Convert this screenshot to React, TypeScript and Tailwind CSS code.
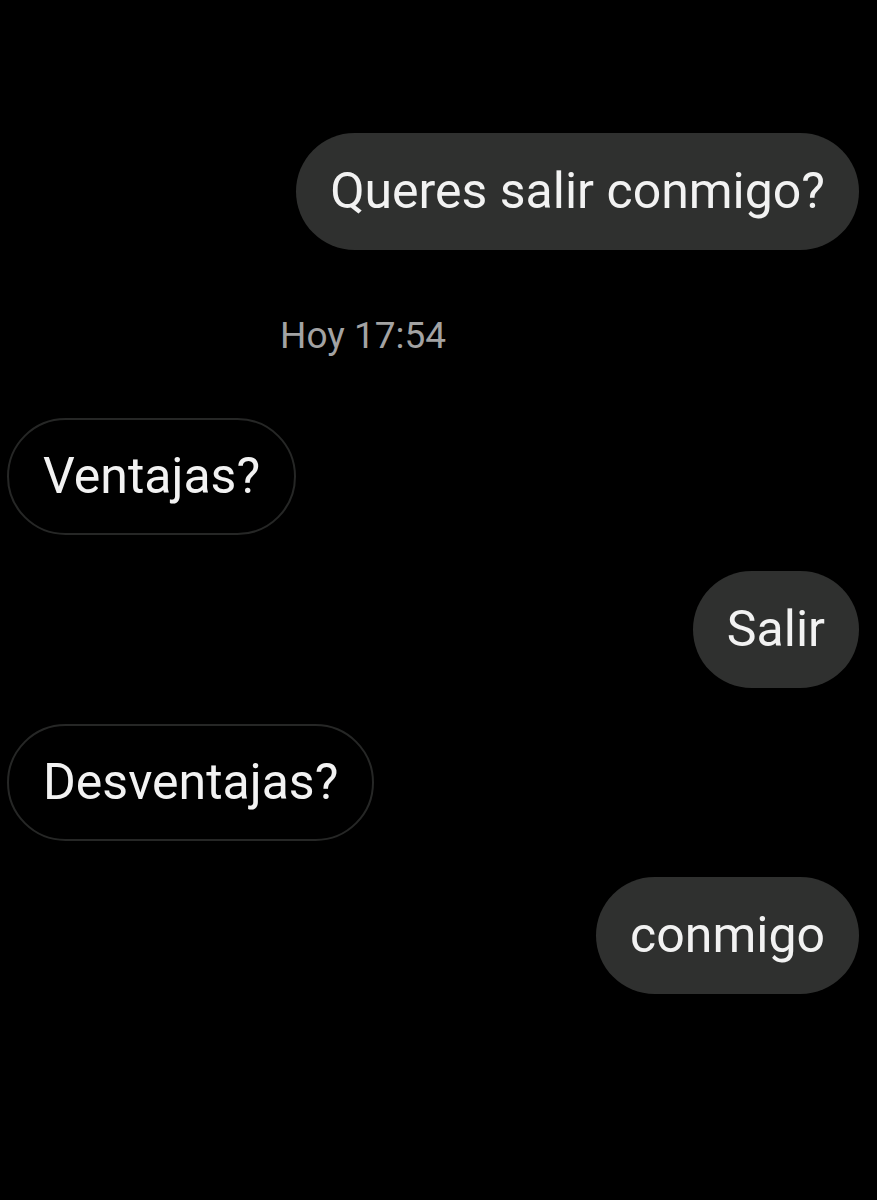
const messages = [
  { text: "Ventajas?", mine: false },
  { text: "Salir", mine: true },
  { text: "Desventajas?", mine: false },
  { text: "conmigo", mine: true },
];

const Bubble = ({ text, mine }: { text: string; mine: boolean }) => (
  <div
    className={
      mine
        ? "self-end h-[117px] flex items-center px-[34px] rounded-full bg-[#2f302f] text-[#f2f2f2] text-[50px]"
        : "self-start h-[117px] flex items-center px-[34px] rounded-full border-2 border-[#262726] text-[#f2f2f2] text-[50px]"
    }
  >
    {text}
  </div>
);

export default function App() {
  return (
    <div
      className="w-[877px] h-[1200px] bg-black flex flex-col pt-[133px] pl-[7px] pr-[18px]"
      style={{ fontFamily: "Roboto, 'Liberation Sans', sans-serif" }}
    >
      <Bubble text="Queres salir conmigo?" mine />
      <p className="mt-[66px] ml-[273px] text-[37px] text-[#a3a3a3] leading-[40px]">
        Hoy 17:54
      </p>
      <div className="mt-[62px] flex flex-col gap-[36px]">
        {messages.map((m) => (
          <Bubble key={m.text} text={m.text} mine={m.mine} />
        ))}
      </div>
    </div>
  );
}
